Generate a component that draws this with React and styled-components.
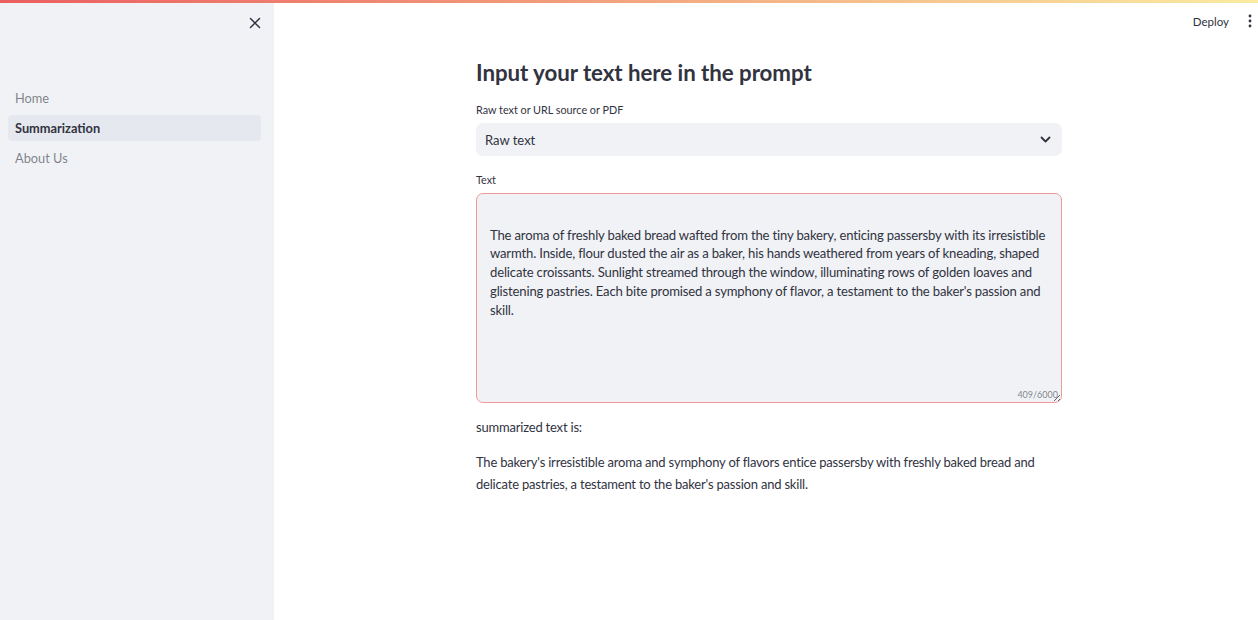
import React from "react";
import styled, { createGlobalStyle } from "styled-components";

const GlobalStyle = createGlobalStyle`
  html, body { margin: 0; padding: 0; height: 100%; }
  body {
    font-family: Lato, "Noto Sans", sans-serif;
    color: #31333f;
    background: #ffffff;
    overflow: hidden;
  }
  #root { height: 100%; }
  * { box-sizing: border-box; }
`;

const Decoration = styled.div`
  position: fixed;
  top: 0;
  left: 0;
  right: 0;
  height: 3px;
  background: linear-gradient(90deg, rgb(235, 95, 95), rgb(250, 235, 160));
  z-index: 10;
`;

const Shell = styled.div`
  display: flex;
  height: 620px;
`;

const Sidebar = styled.aside`
  width: 274px;
  flex-shrink: 0;
  background: #f0f2f6;
  display: flex;
  flex-direction: column;
  padding: 13px 9px 0 8px;
`;

const SidebarTop = styled.div`
  display: flex;
  justify-content: flex-end;
  height: 72px;
`;

const IconButton = styled.button`
  border: none;
  background: transparent;
  padding: 0;
  width: ${(p) => p.$w || 20}px;
  height: 20px;
  display: flex;
  align-items: center;
  justify-content: center;
  color: #31333f;
  cursor: pointer;
`;

const Nav = styled.nav`
  display: flex;
  flex-direction: column;
  gap: 4px;
  padding-right: 4px;
`;

const NavItem = styled.a`
  display: flex;
  align-items: center;
  height: 26px;
  padding: 0 7px;
  border-radius: 4px;
  font-size: 12.8px;
  text-decoration: none;
  color: ${(p) => (p.$active ? "#31333f" : "rgba(49, 51, 63, 0.6)")};
  font-weight: ${(p) => (p.$active ? 700 : 400)};
  background: ${(p) => (p.$active ? "#e5e8ee" : "transparent")};
`;

const Main = styled.main`
  flex: 1;
  display: flex;
  flex-direction: column;
  min-width: 0;
`;

const Header = styled.header`
  height: 46px;
  display: flex;
  align-items: center;
  justify-content: flex-end;
  padding: 0 1px 4px 0;
  gap: 10px;
`;

const DeployButton = styled.button`
  border: none;
  background: transparent;
  font-family: inherit;
  font-size: 11.5px;
  color: #31333f;
  padding: 0 4px;
  cursor: pointer;
`;

const Content = styled.div`
  width: 586px;
  margin: 0 auto;
  transform: translateX(3px);
  display: flex;
  flex-direction: column;
`;

const Title = styled.h3`
  margin: 11px 0 0;
  font-size: 22.3px;
  font-weight: 700;
  line-height: 32px;
  letter-spacing: -0.05px;
`;

const Label = styled.div`
  font-size: 10.8px;
  line-height: 16px;
  margin-top: ${(p) => p.$mt || 0}px;
  margin-bottom: 5px;
`;

const Select = styled.div`
  height: 33px;
  background: #f0f2f6;
  border-radius: 7px;
  display: flex;
  align-items: center;
  justify-content: space-between;
  padding: 0 11px 0 9px;
  font-size: 13px;
`;

const TextAreaWrap = styled.div`
  position: relative;
  height: 210px;
  border: 1px solid #ef9a9a;
  border-radius: 7px;
  background: #f0f2f6;
`;

const TextArea = styled.textarea`
  width: 100%;
  height: 100%;
  border: none;
  outline: none;
  background: transparent;
  resize: none;
  font-family: inherit;
  font-size: 13.1px;
  line-height: 18.7px;
  color: #31333f;
  padding: 13px 13px;
  letter-spacing: -0.17px;
`;

const Counter = styled.span`
  position: absolute;
  right: 3px;
  bottom: 2px;
  font-size: 9px;
  color: rgba(49, 51, 63, 0.6);
`;

const Grip = styled.span`
  position: absolute;
  right: 1px;
  bottom: 1px;
  width: 6px;
  height: 6px;
  background: linear-gradient(135deg, transparent 45%, #666 45%, #666 55%, transparent 55%, transparent 75%, #666 75%, #666 85%, transparent 85%);
`;

const Paragraph = styled.p`
  margin: ${(p) => p.$mt || 0}px 0 0;
  font-size: 13px;
  line-height: 22px;
  letter-spacing: -0.2px;
`;

const text =
  "\nThe aroma of freshly baked bread wafted from the tiny bakery, enticing passersby with its irresistible warmth. Inside, flour dusted the air as a baker, his hands weathered from years of kneading, shaped delicate croissants. Sunlight streamed through the window, illuminating rows of golden loaves and glistening pastries. Each bite promised a symphony of flavor, a testament to the baker's passion and skill.";

export default function App() {
  return (
    <>
      <GlobalStyle />
      <Decoration />
      <Shell>
        <Sidebar>
          <SidebarTop>
            <IconButton aria-label="Close sidebar">
              <svg width="12" height="12" viewBox="0 0 12 12" fill="none" stroke="#31333f" strokeWidth="1.5" strokeLinecap="round">
                <path d="M1.5 1.5 L10.5 10.5 M10.5 1.5 L1.5 10.5" />
              </svg>
            </IconButton>
          </SidebarTop>
          <Nav>
            <NavItem>Home</NavItem>
            <NavItem $active>Summarization</NavItem>
            <NavItem>About Us</NavItem>
          </Nav>
        </Sidebar>
        <Main>
          <Header>
            <DeployButton>Deploy</DeployButton>
            <IconButton $w={14} aria-label="Main menu">
              <svg width="4" height="14" viewBox="0 0 4 14" fill="#31333f">
                <circle cx="2" cy="2" r="1.4" />
                <circle cx="2" cy="7" r="1.4" />
                <circle cx="2" cy="12" r="1.4" />
              </svg>
            </IconButton>
          </Header>
          <Content>
            <Title>Input your text here in the prompt</Title>
            <Label $mt={13}>Raw text or URL source or PDF</Label>
            <Select>
              <span>Raw text</span>
              <svg width="11" height="7" viewBox="0 0 11 7" fill="none" stroke="#31333f" strokeWidth="1.8" strokeLinecap="round" strokeLinejoin="round">
                <path d="M1.5 1.5 L5.5 5.5 L9.5 1.5" />
              </svg>
            </Select>
            <Label $mt={16}>Text</Label>
            <TextAreaWrap>
              <TextArea defaultValue={text} />
              <Counter>409/6000</Counter>
              <Grip />
            </TextAreaWrap>
            <Paragraph $mt={13}>summarized text is:</Paragraph>
            <Paragraph $mt={13}>
              The bakery's irresistible aroma and symphony of flavors entice passersby with freshly baked bread and delicate pastries, a testament to the baker's passion and skill.
            </Paragraph>
          </Content>
        </Main>
      </Shell>
    </>
  );
}
